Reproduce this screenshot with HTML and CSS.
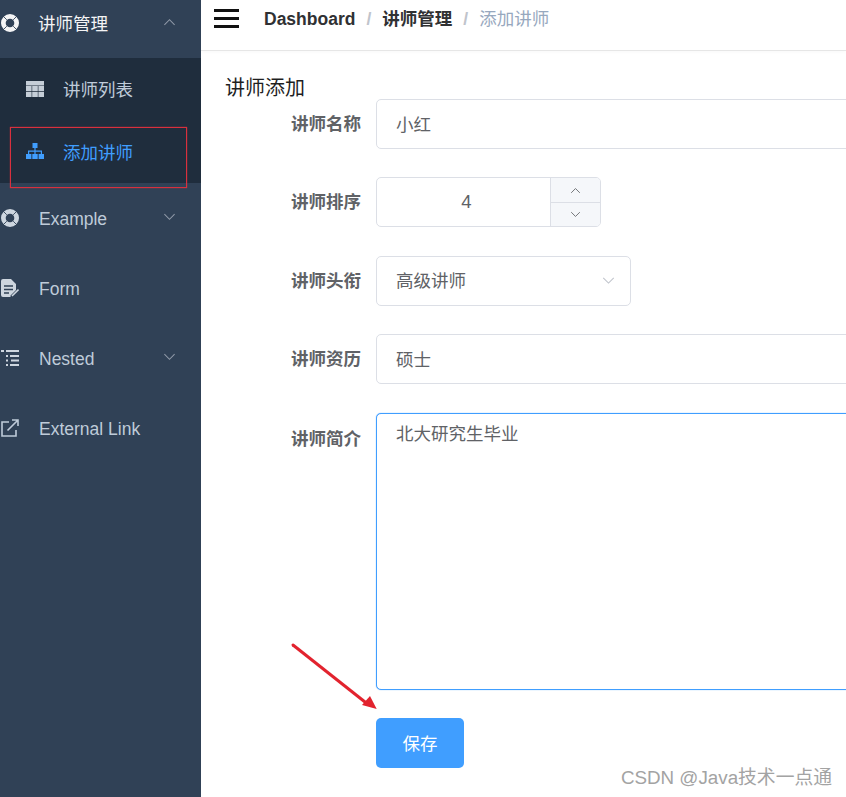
FILE: index.html
```html
<!DOCTYPE html>
<html>
<head>
  <meta charset="UTF-8">
  <title>添加讲师</title>
  <link rel="stylesheet" href="styles.css">
</head>
<body>
  <div class="app">
    <div class="sidebar">
      <div class="menu-item menu-open">
        <svg class="icon" viewBox="0 0 18 18"><circle cx="9" cy="9" r="9"/><circle class="hole" cx="9" cy="9" r="4.300"/><path class="slit" d="M2 2L5.800 5.800M16 2L12.200 5.800M2 16L5.800 12.200M16 16L12.200 12.200"/></svg>
        <span class="menu-text">讲师管理</span>
        <svg class="arrow" viewBox="0 0 14 8"><path d="M1.500 7L7 1.500L12.500 7"/></svg>
      </div>
      <div class="submenu">
        <div class="sub-item">
          <svg class="icon" viewBox="0 0 18 18"><path d="M0 1h18v4.500H0zM0 6.100h5.600v5H0zM6.200 6.100h5.600v5H6.200zM12.400 6.100H18v5h-5.600zM0 11.800h5.600V17H0zM6.200 11.800h5.600V17H6.200zM12.400 11.800H18V17h-5.600z"/></svg>
          <span class="menu-text">讲师列表</span>
        </div>
        <div class="sub-item sub-active">
          <svg class="icon" viewBox="0 0 18 18"><path d="M6.500 1h5v5h-5zM8.400 6h1.200v2.600H16V12h-1.200V9.800H9.600V12H8.400V9.800H3.200V12H2V8.600h6.400zM0 12h5.400v5H0zM6.300 12h5.400v5H6.300zM12.600 12H18v5h-5.400z"/></svg>
          <span class="menu-text">添加讲师</span>
        </div>
      </div>
      <div class="menu-item">
        <svg class="icon" viewBox="0 0 18 18"><circle cx="9" cy="9" r="9"/><circle class="hole" cx="9" cy="9" r="4.300"/><path class="slit" d="M2 2L5.800 5.800M16 2L12.200 5.800M2 16L5.800 12.200M16 16L12.200 12.200"/></svg>
        <span class="menu-text menu-latin">Example</span>
        <svg class="arrow" viewBox="0 0 14 8"><path d="M1.500 1L7 6.500L12.500 1"/></svg>
      </div>
      <div class="menu-item">
        <svg class="icon" viewBox="0 0 18 18"><path d="M2 0h8l5 5v6l-5.500 5.500V18H2a2 2 0 0 1-2-2V2a2 2 0 0 1 2-2z"/><path class="cut" d="M3 7h9M3 10.500h9M3 14h5"/><path class="pen" d="M11 17l6.500-6.500"/></svg>
        <span class="menu-text menu-latin">Form</span>
      </div>
      <div class="menu-item">
        <svg class="icon" viewBox="0 0 18 18"><path d="M0 1h3v2H0zM5 1h13v2H5zM5 6h2v2H5zM9 6h9v2H9zM10 10.500h8v2h-8zM5 10.500h2v2H5zM5 15h2v2H5zM9 15h9v2H9z"/></svg>
        <span class="menu-text menu-latin">Nested</span>
        <svg class="arrow" viewBox="0 0 14 8"><path d="M1.500 1L7 6.500L12.500 1"/></svg>
      </div>
      <div class="menu-item">
        <svg class="icon icon-line" viewBox="0 0 18 18"><path d="M8 3H1v14h14v-6"/><path d="M6.500 11.500L16.500 1.500M11 1h6v6"/></svg>
        <span class="menu-text menu-latin">External Link</span>
      </div>
    </div>

    <div class="main">
      <div class="navbar">
        <div class="hamburger"><span></span><span></span><span></span></div>
        <div class="breadcrumb">
          <span class="crumb">Dashboard</span>
          <span class="sep">/</span>
          <span class="crumb">讲师管理</span>
          <span class="sep">/</span>
          <span class="crumb-last">添加讲师</span>
        </div>
      </div>

      <div class="content">
        <div class="title">讲师添加</div>
        <div class="form-row">
          <label class="form-label">讲师名称</label>
          <div class="input">小红</div>
        </div>
        <div class="form-row">
          <label class="form-label">讲师排序</label>
          <div class="number">
            <div class="number-value">4</div>
            <div class="number-btns">
              <div class="number-btn"><svg class="btn-arrow" viewBox="0 0 14 8"><path d="M1.500 7L7 1.500L12.500 7"/></svg></div>
              <div class="number-btn"><svg class="btn-arrow" viewBox="0 0 14 8"><path d="M1.500 1L7 6.500L12.500 1"/></svg></div>
            </div>
          </div>
        </div>
        <div class="form-row">
          <label class="form-label">讲师头衔</label>
          <div class="select">
            <span class="select-text">高级讲师</span>
            <svg class="select-arrow" viewBox="0 0 14 8"><path d="M1 1L7 7L13 1"/></svg>
          </div>
        </div>
        <div class="form-row">
          <label class="form-label">讲师资历</label>
          <div class="input">硕士</div>
        </div>
        <div class="form-row">
          <label class="form-label form-label-top">讲师简介</label>
          <div class="textarea">北大研究生毕业</div>
        </div>
        <div class="form-row">
          <div class="form-label"></div>
          <button class="save-btn">保存</button>
        </div>
      </div>
    </div>
  </div>

  <!-- 截图上的标注 -->
  <div class="mark-box"></div>
  <svg class="mark-arrow" width="100" height="90" viewBox="0 0 100 90">
    <path d="M3 3L75 60" stroke="#e2232e" stroke-width="3" stroke-linecap="round"/>
    <path d="M86.700 67L72 63L80 54z" fill="#e2232e"/>
  </svg>
  <div class="watermark">CSDN @Java技术一点通</div>
</body>
</html>
```

FILE: styles.css
```css
html, body {
  margin: 0;
  height: 100%;
  overflow: hidden;
}
body {
  position: relative;
  background-color: #fff;
  font-family: "Liberation Sans", "Noto Sans CJK SC", sans-serif;
}
.app {
  display: flex;
  height: 809px;
  margin-top: -12px;
}
.sidebar {
  width: 201px;
  flex-shrink: 0;
  background-color: #304156;
}
.menu-item {
  display: flex;
  align-items: center;
  height: 70px;
  padding-left: 1px;
  position: relative;
  color: #bfcbd9;
  font-size: 17.5px;
}
.menu-open {
  color: #f4f4f5;
}
.menu-text {
  margin-left: 19px;
}
.menu-open .menu-text {
  margin-top: -2px;
}
.menu-latin {
  margin-left: 20px;
  padding-top: 2px;
}
.icon {
  width: 18px;
  height: 18px;
  flex-shrink: 0;
  fill: #ced6df;
}
.menu-open .icon {
  fill: #f4f4f5;
}
.icon .hole {
  fill: #304156;
}
.slit {
  fill: none;
  stroke: #304156;
  stroke-width: 0.9;
}
.cut {
  fill: none;
  stroke: #304156;
  stroke-width: 1.6;
}
.pen {
  fill: none;
  stroke: #ced6df;
  stroke-width: 1.6;
}
.icon-line {
  fill: none;
  stroke: #bfcbd9;
  stroke-width: 1.6;
}
.arrow {
  position: absolute;
  left: 163px;
  top: 30px;
  width: 13px;
  height: 8px;
  fill: none;
  stroke: #909aa8;
  stroke-width: 1.1;
}
.submenu {
  background-color: #1f2d3d;
  height: 125px;
}
.sub-item {
  display: flex;
  align-items: center;
  height: 62.5px;
  padding-left: 26px;
  color: #bfcbd9;
  font-size: 17.5px;
}
.sub-item .icon {
  margin-top: -1px;
  fill: #c5ced8;
}
.sub-item .menu-text {
  margin-top: -1px;
}
.sub-active {
  color: #409eff;
}
.sub-active .icon {
  fill: #409eff;
}
.main {
  flex: 1;
  min-width: 0;
  overflow: hidden;
}
.navbar {
  display: flex;
  align-items: center;
  height: 62px;
  border-bottom: 1px solid #e6e6e6;
  box-shadow: 0 1px 4px rgba(0, 21, 41, 0.03);
}
.hamburger {
  display: flex;
  flex-direction: column;
  gap: 5px;
  width: 25px;
  margin-left: 13px;
  margin-right: 25px;
  margin-top: -1px;
}
.hamburger span {
  height: 3px;
  background-color: #111;
}
.breadcrumb {
  display: flex;
  align-items: center;
  font-size: 17.5px;
  line-height: 24px;
}
.crumb {
  font-weight: bold;
  color: #303133;
}
.crumb-last {
  color: #97a8be;
}
.sep {
  color: #c0c4cc;
  font-weight: bold;
  margin: 0 11px;
}
.content {
  padding: 19.9px 0 0 25px;
}
.title {
  font-size: 20px;
  line-height: 34px;
  height: 28px;
  margin-left: -1px;
  color: #1f1f1f;
}
.form-row {
  display: flex;
  align-items: flex-start;
  margin-bottom: 28.5px;
}
.form-label {
  width: 135px;
  flex-shrink: 0;
  text-align: right;
  font-size: 17.5px;
  font-weight: bold;
  line-height: 50px;
  color: #606266;
}
.form-label-top {
  line-height: 52px;
}
.input, .select, .number, .textarea {
  box-sizing: border-box;
  border: 1px solid #dcdfe6;
  border-radius: 5px;
  background-color: #fff;
  color: #606266;
  font-size: 17.5px;
}
.input {
  width: 600px;
  height: 50px;
  line-height: 50px;
  margin-left: 15px;
  padding-left: 19px;
  flex-shrink: 0;
}
.select {
  display: flex;
  align-items: center;
  justify-content: space-between;
  width: 255px;
  height: 50px;
  margin-left: 15px;
  padding: 0 15px 0 19px;
}
.select-text {
  margin-top: -2px;
}
.select-arrow {
  width: 13px;
  height: 7px;
  fill: none;
  stroke: #c0c4cc;
  stroke-width: 1.2;
}
.number {
  display: flex;
  width: 225px;
  height: 50px;
  margin-left: 15px;
}
.number-value {
  flex: 1;
  text-align: center;
  line-height: 48px;
  font-size: 18.5px;
  padding-left: 6px;
}
.number-btns {
  width: 49px;
  display: flex;
  flex-direction: column;
  border-left: 1px solid #dcdfe6;
  background-color: #f5f7fa;
  border-radius: 0 4px 4px 0;
}
.number-btn {
  flex: 1;
  display: flex;
  align-items: center;
  justify-content: center;
}
.number-btn + .number-btn {
  border-top: 1px solid #dcdfe6;
}
.btn-arrow {
  width: 11px;
  height: 7px;
  fill: none;
  stroke: #606266;
  stroke-width: 1.1;
}
.textarea {
  width: 600px;
  height: 277px;
  margin-left: 15px;
  padding: 7px 19px;
  line-height: 26px;
  flex-shrink: 0;
  border-color: #409eff;
  box-shadow: 0 0 1px #409eff;
}
.save-btn {
  width: 88px;
  height: 50px;
  margin-left: 15px;
  padding: 0 0 2px;
  border: none;
  border-radius: 5px;
  background-color: #409eff;
  color: #fff;
  font-family: inherit;
  font-size: 17.5px;
  cursor: pointer;
}
.mark-box {
  position: absolute;
  left: 10px;
  top: 127px;
  width: 175px;
  height: 59px;
  border: 1px solid #d8303e;
  box-shadow: 0 0 1px #d8303e;
}
.mark-arrow {
  position: absolute;
  left: 290px;
  top: 642px;
}
.watermark {
  position: absolute;
  right: 14px;
  top: 765px;
  font-size: 18.8px;
  line-height: 26px;
  color: #a3a3a3;
}
```
